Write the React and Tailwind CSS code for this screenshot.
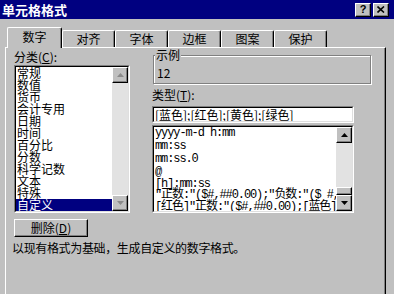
import React from "react";

const cjk = { fontFamily: "'Noto Sans CJK SC', sans-serif" };
const mono = { fontFamily: "'Liberation Mono', 'Noto Sans CJK SC', monospace" };

function Tri({ dir = "up", color = "#000" }) {
  return (
    <svg width="7" height="4" viewBox="0 0 7 4" className="block">
      {dir === "up" ? (
        <polygon points="3.5,0 7,4 0,4" fill={color} />
      ) : (
        <polygon points="0,0 7,0 3.5,4" fill={color} />
      )}
    </svg>
  );
}

function RaisedBox({ className = "", children }) {
  return (
    <div
      className={
        "flex items-center justify-center bg-[#c0c0c0] border border-t-white border-l-white border-r-black border-b-black shadow-[inset_-1px_-1px_0_#808080] " +
        className
      }
    >
      {children}
    </div>
  );
}

function Sunken({ className = "", children }) {
  return (
    <div className={"border border-t-[#808080] border-l-[#808080] border-r-white border-b-white " + className}>
      <div className="h-full w-full border border-t-black border-l-black border-r-[#dfdfdf] border-b-[#dfdfdf] bg-white flex overflow-hidden">
        {children}
      </div>
    </div>
  );
}

function ScrollBar({ disabled, thumb }) {
  const c = disabled ? "#8a8a8a" : "#000";
  return (
    <div className="w-[16px] h-full flex flex-col bg-[#e2e2e2] shrink-0">
      <RaisedBox className="w-[16px] h-[16px] shrink-0">
        <Tri dir="up" color={c} />
      </RaisedBox>
      <div className="flex-1" />
      {thumb && <RaisedBox className="w-[16px] h-[8px] shrink-0" />}
      <RaisedBox className="w-[16px] h-[16px] shrink-0">
        <Tri dir="down" color={c} />
      </RaisedBox>
    </div>
  );
}

const categories = ["常规", "数值", "货币", "会计专用", "日期", "时间", "百分比", "分数", "科学记数", "文本", "特殊", "自定义"];

const formats = [
  { t: "yyyy-m-d h:mm", h: "h-[13px]" },
  { t: "mm:ss", h: "h-[13px]" },
  { t: "mm:ss.0", h: "h-[13px]" },
  { t: "@", h: "h-[12px]" },
  { t: "[h]:mm:ss", h: "h-[11px]" },
  { t: "\"正数:\"($#,##0.00);\"负数:\"($ #,##0.00)", h: "h-[12px]" },
  { t: "[红色]\"正数:\"($#,##0.00);[蓝色]\"负数:\"", h: "h-[12px]" },
];

const tabs = ["对齐", "字体", "边框", "图案", "保护"];

export default function App() {
  return (
    <div className="w-[394px] h-[294px] bg-[#c0c0c0] overflow-hidden flex flex-col text-black" style={cjk}>
      {/* Title bar */}
      <div className="h-[19px] shrink-0 bg-[#000080] flex items-center justify-between pl-[2px] pr-[5px]">
        <span className="text-white font-bold text-[13px] leading-[15px]">单元格格式</span>
        <div className="flex gap-[2px]">
          <RaisedBox className="w-[16px] h-[14px]">
            <span className="text-[11px] font-bold leading-[11px]" style={{ fontFamily: "'Liberation Sans', sans-serif" }}>?</span>
          </RaisedBox>
          <RaisedBox className="w-[16px] h-[14px]">
            <svg width="8" height="7" viewBox="0 0 8 7">
              <path d="M0.5 0.5 L7 6.5 M7 0.5 L0.5 6.5" stroke="#000" strokeWidth="1.6" />
            </svg>
          </RaisedBox>
        </div>
      </div>

      <div className="flex-1 flex flex-col pt-[8px] pl-[5px] pr-[8px]">
        {/* Tabs */}
        <div className="h-[20px] shrink-0 flex items-end pl-[2px]">
          <div className="relative z-10 w-[55px] h-[21px] -mb-[1px] bg-[#c0c0c0] border-t border-l border-white border-r border-r-black rounded-t-[2px] shadow-[inset_-1px_0_0_#808080] flex items-center justify-center text-[12px] leading-[14px] pb-[2px]">
            数字
          </div>
          {tabs.map((t) => (
            <div
              key={t}
              className="w-[53px] h-[17px] bg-[#c0c0c0] border-t border-l border-white border-r border-r-black rounded-t-[2px] shadow-[inset_-1px_0_0_#808080] flex items-center justify-center text-[12px] leading-[14px]"
            >
              {t}
            </div>
          ))}
        </div>

        {/* Panel */}
        <div className="flex-1 border-t border-l border-white border-r border-r-black shadow-[inset_-1px_0_0_#808080] pl-[8px] flex flex-col">
          <div className="flex gap-[22px]">
            {/* Left column */}
            <div className="flex flex-col w-[116px]">
              <div className="mt-[2px] h-[15px] text-[12px] leading-[14px]">
                分类(<span className="underline">C</span>):
              </div>
              <Sunken className="w-[116px] h-[148px]">
                <div className="flex-1 flex flex-col">
                  {categories.map((c, i) => (
                    <div
                      key={c}
                      className={
                        "h-[12px] text-[12px] leading-[12px] pl-[1px] whitespace-nowrap " +
                        (i === categories.length - 1 ? "bg-[#000080] text-white" : "")
                      }
                    >
                      {c}
                    </div>
                  ))}
                </div>
                <ScrollBar disabled />
              </Sunken>
            </div>

            {/* Right column */}
            <div className="flex flex-col w-[219px]">
              <div className="relative mt-[7px] ml-[1px] w-[218px] h-[29px] border border-[#808080] shadow-[inset_1px_1px_0_#fff,1px_1px_0_#fff] pl-[3px] pt-[10px]">
                <span className="absolute -top-[8px] left-[1px] px-[1px] bg-[#c0c0c0] text-[12px] leading-[14px]">示例</span>
                <div className="text-[12px] leading-[14px]">12</div>
              </div>
              <div className="mt-[4px] h-[14px] text-[12px] leading-[14px]">
                类型(<span className="underline">T</span>):
              </div>
              <Sunken className="mt-[4px] w-[202px] h-[17px]">
                <div className="px-[1px] text-[12px] leading-[13px] whitespace-nowrap">[蓝色];[红色];[黄色];[绿色]</div>
              </Sunken>
              <Sunken className="mt-[2px] w-[202px] h-[88px]">
                <div className="flex-1 flex flex-col overflow-hidden">
                  {formats.map((f) => (
                    <div
                      key={f.t}
                      className={f.h + " shrink-0 text-[12px] leading-[12px] tracking-[-1.1px] pl-[1px] whitespace-nowrap"}
                      style={mono}
                    >
                      {f.t}
                    </div>
                  ))}
                </div>
                <ScrollBar thumb />
              </Sunken>
            </div>
          </div>

          <RaisedBox className="mt-[6px] w-[74px] h-[18px] text-[12px] leading-[14px]">
            删除(<span className="underline">D</span>)
          </RaisedBox>
          <div className="mt-[4px] -ml-[2px] text-[12px] leading-[14px] tracking-[-0.35px] whitespace-nowrap">
            以现有格式为基础，生成自定义的数字格式。
          </div>
        </div>
      </div>
    </div>
  );
}
